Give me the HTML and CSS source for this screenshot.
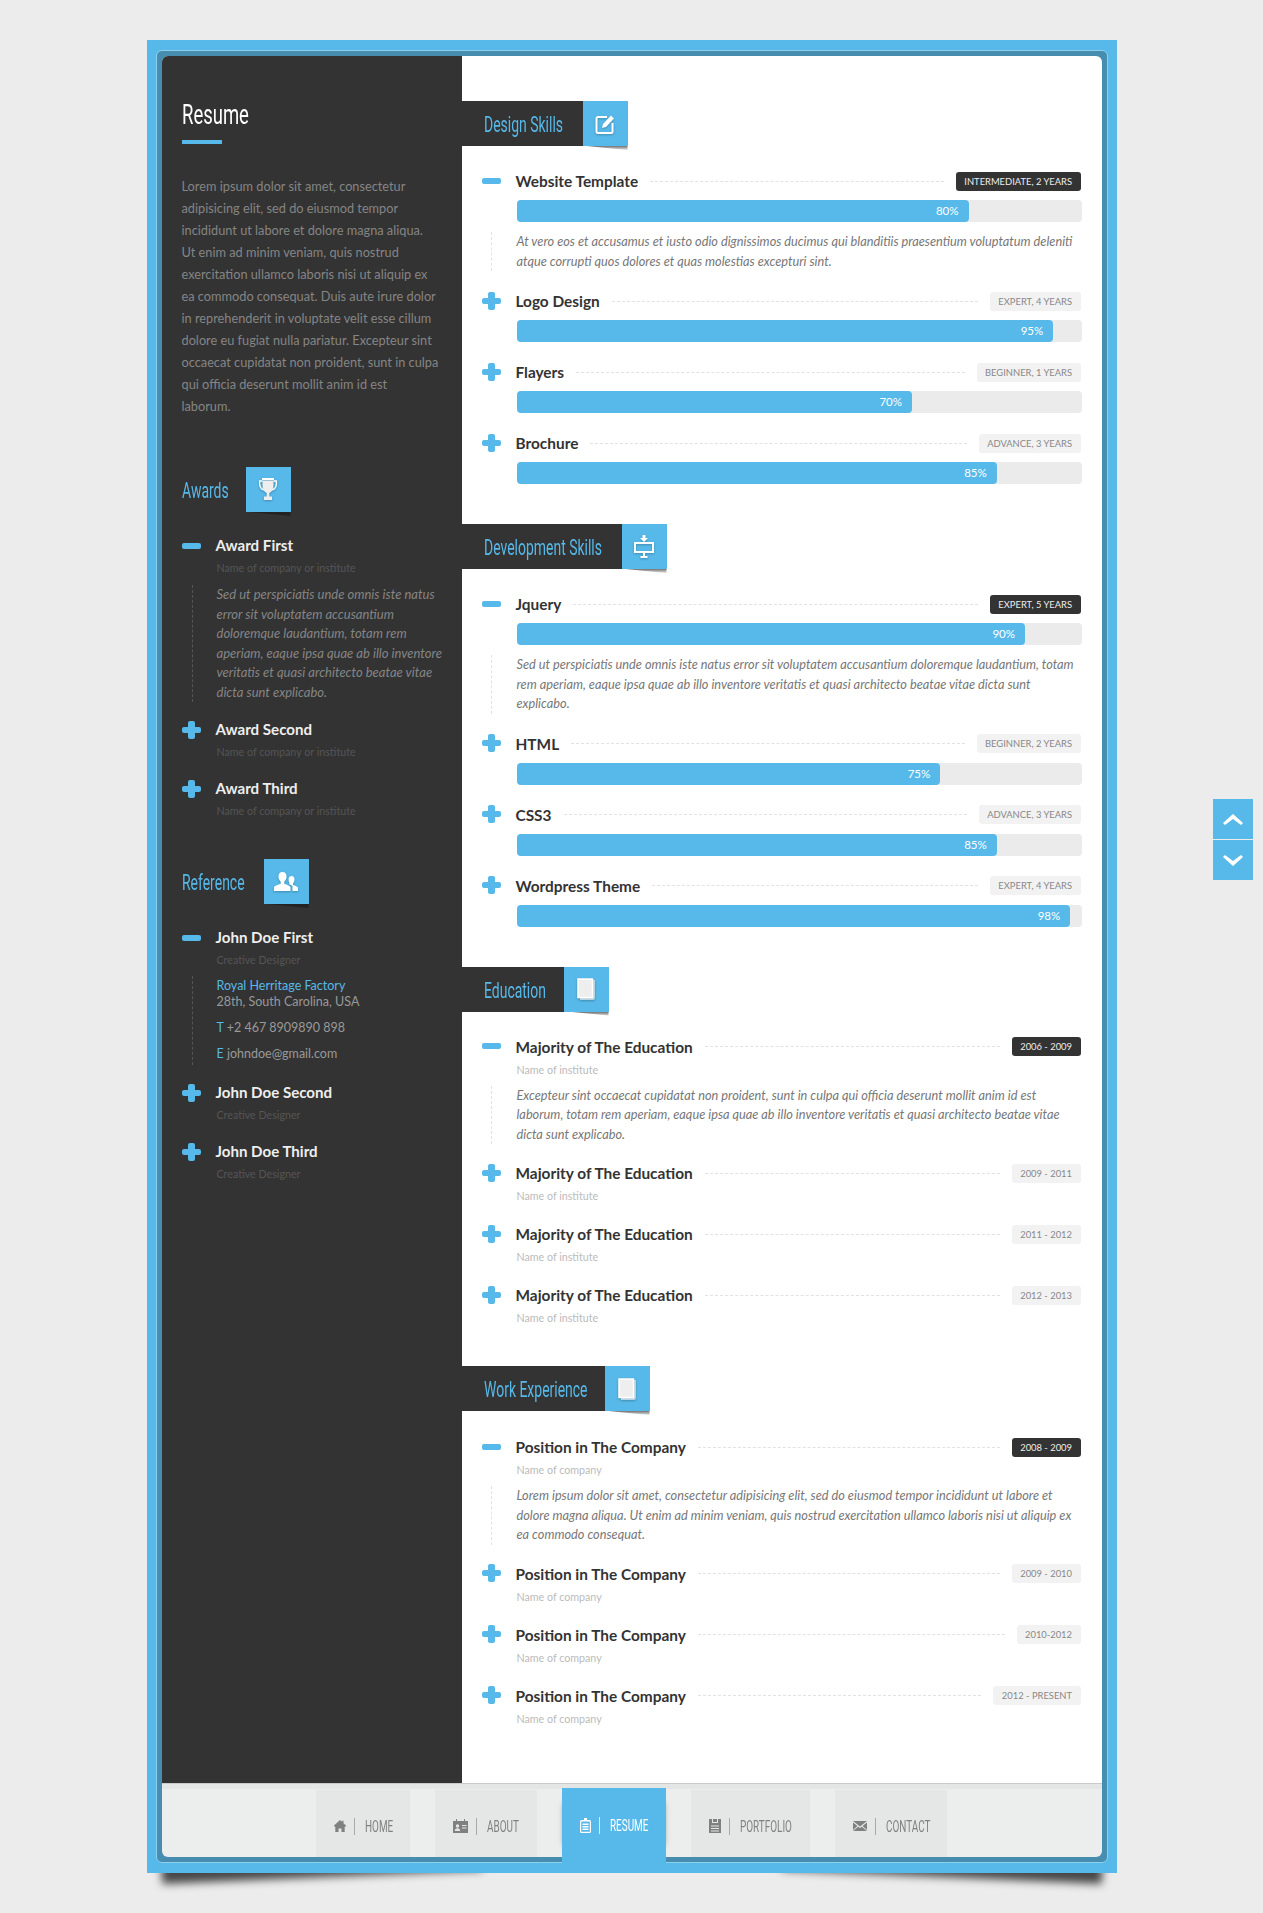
FILE: index.html
```html
<!DOCTYPE html>
<html lang="en">
  <head>
    <meta charset="UTF-8" />
    <meta name="viewport" content="width=device-width, initial-scale=1.0" />
    <title>Resume</title>
    <link rel="stylesheet" href="styles.css">
  </head>
  <body>
    <div class="page">
      <div class="frame">
        <div class="content">
          <aside class="sidebar">
            <h1 class="page-title"><span>Resume</span></h1>
            <p class="intro">Lorem ipsum dolor sit amet, consectetur<br>adipisicing elit, sed do eiusmod tempor<br>incididunt ut labore et dolore magna aliqua.<br>Ut enim ad minim veniam, quis nostrud<br>exercitation ullamco laboris nisi ut aliquip ex<br>ea commodo consequat. Duis aute irure dolor<br>in reprehenderit in voluptate velit esse cillum<br>dolore eu fugiat nulla pariatur. Excepteur sint<br>occaecat cupidatat non proident, sunt in culpa<br>qui officia deserunt mollit anim id est<br>laborum.</p>

            <div class="head">
              <h2 class="w-awards"><span>Awards</span></h2>
              <span class="head-icon">
                <svg width="18" height="23" viewBox="0 0 18 23"><path d="M3 0h12v2H3z" fill="#fff"/><path d="M3.500 2.500h11v5c0 4-2 6.500-4.200 7.500v3.500h2.700V22H5v-3.500h2.700V15C5.500 14 3.500 11.500 3.500 7.500z" fill="#eee"/><path d="M3.500 3H.7v3c0 3 1.500 5 4 6M14.500 3h2.800v3c0 3-1.500 5-4 6" fill="none" stroke="#fff" stroke-width="1.400"/></svg>
              </span>
            </div>
            <div class="item open">
              <div class="item-row"><span class="toggle"></span><h4>Award First</h4></div>
              <p class="sub">Name of company or institute</p>
              <p class="desc">Sed ut perspiciatis unde omnis iste natus<br>error sit voluptatem accusantium<br>doloremque laudantium, totam rem<br>aperiam, eaque ipsa quae ab illo inventore<br>veritatis et quasi architecto beatae vitae<br>dicta sunt explicabo.</p>
            </div>
            <div class="item">
              <div class="item-row"><span class="toggle plus"></span><h4>Award Second</h4></div>
              <p class="sub">Name of company or institute</p>
            </div>
            <div class="item">
              <div class="item-row"><span class="toggle plus"></span><h4>Award Third</h4></div>
              <p class="sub">Name of company or institute</p>
            </div>

            <div class="head head-ref">
              <h2 class="w-ref"><span>Reference</span></h2>
              <span class="head-icon">
                <svg width="24" height="20" viewBox="0 0 24 20" fill="#fff"><path d="M8.500 0c2.800 0 4 2 4 4.500 0 2.300-1 4.200-2.200 5v2.200c2.500.8 5.200 1.800 6.200 3.300V19H0v-4c1-1.500 4-2.500 6.700-3.300V9.500c-1.200-.8-2.200-2.700-2.200-5C4.500 2 5.700 0 8.500 0z"/><path d="M17.500 4c2 0 3 1.500 3 3.500 0 1.800-.8 3.200-1.600 3.900v1.500c2 .6 4 1.400 5.100 2.600V19h-5.500v-4.800c-.8-.9-2-1.500-3.400-2 .4-.5.500-.8.500-1.200-.6-.8-1-2-1-3.500 0-2 1-3.500 2.900-3.500z"/></svg>
              </span>
            </div>
            <div class="item open">
              <div class="item-row"><span class="toggle"></span><h4>John Doe First</h4></div>
              <p class="sub">Creative Designer</p>
              <div class="contact">
                <p><a href="#">Royal Herritage Factory</a><br>28th, South Carolina, USA</p>
                <p><b>T</b> +2 467 8909890 898</p>
                <p><b>E</b> johndoe@gmail.com</p>
              </div>
            </div>
            <div class="item">
              <div class="item-row"><span class="toggle plus"></span><h4>John Doe Second</h4></div>
              <p class="sub">Creative Designer</p>
            </div>
            <div class="item">
              <div class="item-row"><span class="toggle plus"></span><h4>John Doe Third</h4></div>
              <p class="sub">Creative Designer</p>
            </div>
          </aside>

          <main class="main">
            <section class="block">
              <div class="head">
                <h2 class="w-design"><span>Design Skills</span></h2>
                <span class="head-icon">
                  <svg width="21" height="20" viewBox="0 0 21 20"><path d="M12 3H3a1.500 1.500 0 0 0-1.500 1.500v13A1.500 1.500 0 0 0 3 19h13a1.500 1.500 0 0 0 1.500-1.500V9" fill="none" stroke="#fff" stroke-width="2"/><path d="M7 14l1-4 8-8.500 3 3-8 8.500z" fill="#fff"/></svg>
                </span>
              </div>
              <div class="item open">
                <div class="item-row"><span class="toggle"></span><h4>Website Template</h4><span class="rule"></span><span class="tag tag-dark">Intermediate, 2 years</span></div>
                <div class="bar"><div class="fill" style="width: 80%">80%</div></div>
                <p class="desc">At vero eos et accusamus et iusto odio dignissimos ducimus qui blanditiis praesentium voluptatum deleniti<br>atque corrupti quos dolores et quas molestias excepturi sint.</p>
              </div>
              <div class="item">
                <div class="item-row"><span class="toggle plus"></span><h4>Logo Design</h4><span class="rule"></span><span class="tag">Expert, 4 years</span></div>
                <div class="bar"><div class="fill" style="width: 95%">95%</div></div>
              </div>
              <div class="item">
                <div class="item-row"><span class="toggle plus"></span><h4>Flayers</h4><span class="rule"></span><span class="tag">Beginner, 1 years</span></div>
                <div class="bar"><div class="fill" style="width: 70%">70%</div></div>
              </div>
              <div class="item">
                <div class="item-row"><span class="toggle plus"></span><h4>Brochure</h4><span class="rule"></span><span class="tag">Advance, 3 years</span></div>
                <div class="bar"><div class="fill" style="width: 85%">85%</div></div>
              </div>
            </section>

            <section class="block">
              <div class="head">
                <h2 class="w-dev"><span>Development Skills</span></h2>
                <span class="head-icon">
                  <svg width="20" height="23" viewBox="0 0 20 23" fill="#fff"><path d="M8.500 0h3v3H14l-4 4-4-4h2.500z"/><path d="M1 8h18v9H1z" fill="none" stroke="#fff" stroke-width="2"/><path d="M9 17h2v4h2.500v2h-7v-2H9z"/></svg>
                </span>
              </div>
              <div class="item open">
                <div class="item-row"><span class="toggle"></span><h4>Jquery</h4><span class="rule"></span><span class="tag tag-dark">Expert, 5 years</span></div>
                <div class="bar"><div class="fill" style="width: 90%">90%</div></div>
                <p class="desc">Sed ut perspiciatis unde omnis iste natus error sit voluptatem accusantium doloremque laudantium, totam<br>rem aperiam, eaque ipsa quae ab illo inventore veritatis et quasi architecto beatae vitae dicta sunt<br>explicabo.</p>
              </div>
              <div class="item">
                <div class="item-row"><span class="toggle plus"></span><h4>HTML</h4><span class="rule"></span><span class="tag">Beginner, 2 years</span></div>
                <div class="bar"><div class="fill" style="width: 75%">75%</div></div>
              </div>
              <div class="item">
                <div class="item-row"><span class="toggle plus"></span><h4>CSS3</h4><span class="rule"></span><span class="tag">Advance, 3 years</span></div>
                <div class="bar"><div class="fill" style="width: 85%">85%</div></div>
              </div>
              <div class="item">
                <div class="item-row"><span class="toggle plus"></span><h4>Wordpress Theme</h4><span class="rule"></span><span class="tag">Expert, 4 years</span></div>
                <div class="bar"><div class="fill" style="width: 98%">98%</div></div>
              </div>
            </section>

            <section class="block">
              <div class="head">
                <h2 class="w-edu"><span>Education</span></h2>
                <span class="head-icon">
                  <svg width="18" height="22" viewBox="0 0 18 22"><path d="M3 2h15v18a2 2 0 0 1-2 2H3z" fill="#b9d3e0"/><path d="M1 1h14.500v18.500H1z" fill="#eee" stroke="#fff" stroke-width="1.500"/></svg>
                </span>
              </div>
              <div class="item has-sub open">
                <div class="item-row"><span class="toggle"></span><h4>Majority of The Education</h4><span class="rule"></span><span class="tag tag-dark">2006 - 2009</span></div>
                <p class="sub">Name of institute</p>
                <p class="desc">Excepteur sint occaecat cupidatat non proident, sunt in culpa qui officia deserunt mollit anim id est<br>laborum, totam rem aperiam, eaque ipsa quae ab illo inventore veritatis et quasi architecto beatae vitae<br>dicta sunt explicabo.</p>
              </div>
              <div class="item has-sub">
                <div class="item-row"><span class="toggle plus"></span><h4>Majority of The Education</h4><span class="rule"></span><span class="tag">2009 - 2011</span></div>
                <p class="sub">Name of institute</p>
              </div>
              <div class="item has-sub">
                <div class="item-row"><span class="toggle plus"></span><h4>Majority of The Education</h4><span class="rule"></span><span class="tag">2011 - 2012</span></div>
                <p class="sub">Name of institute</p>
              </div>
              <div class="item has-sub">
                <div class="item-row"><span class="toggle plus"></span><h4>Majority of The Education</h4><span class="rule"></span><span class="tag">2012 - 2013</span></div>
                <p class="sub">Name of institute</p>
              </div>
            </section>

            <section class="block">
              <div class="head">
                <h2 class="w-work"><span>Work Experience</span></h2>
                <span class="head-icon">
                  <svg width="18" height="22" viewBox="0 0 18 22"><path d="M3 2h15v18a2 2 0 0 1-2 2H3z" fill="#b9d3e0"/><path d="M1 1h14.500v18.500H1z" fill="#eee" stroke="#fff" stroke-width="1.500"/></svg>
                </span>
              </div>
              <div class="item has-sub open">
                <div class="item-row"><span class="toggle"></span><h4>Position in The Company</h4><span class="rule"></span><span class="tag tag-dark">2008 - 2009</span></div>
                <p class="sub">Name of company</p>
                <p class="desc">Lorem ipsum dolor sit amet, consectetur adipisicing elit, sed do eiusmod tempor incididunt ut labore et<br>dolore magna aliqua. Ut enim ad minim veniam, quis nostrud exercitation ullamco laboris nisi ut aliquip ex<br>ea commodo consequat.</p>
              </div>
              <div class="item has-sub">
                <div class="item-row"><span class="toggle plus"></span><h4>Position in The Company</h4><span class="rule"></span><span class="tag">2009 - 2010</span></div>
                <p class="sub">Name of company</p>
              </div>
              <div class="item has-sub">
                <div class="item-row"><span class="toggle plus"></span><h4>Position in The Company</h4><span class="rule"></span><span class="tag">2010-2012</span></div>
                <p class="sub">Name of company</p>
              </div>
              <div class="item has-sub">
                <div class="item-row"><span class="toggle plus"></span><h4>Position in The Company</h4><span class="rule"></span><span class="tag">2012 - Present</span></div>
                <p class="sub">Name of company</p>
              </div>
            </section>
          </main>
        </div>

        <nav class="nav">
          <a class="nav-item" href="#">
            <svg width="12" height="12" viewBox="0 0 12 12" fill="#808080"><path d="M6 0l2 1.800V.8h1.500v2.400L12 5.500v1h-1.300V12H7.500V8.500h-3V12H1.300V6.500H0v-1z"/></svg>
            <span class="nav-sep"></span><span class="nav-label w-home">Home</span>
          </a>
          <a class="nav-item" href="#">
            <svg width="15" height="14" viewBox="0 0 15 14"><path d="M0 2h3V0h1v2h7V0h1v2h3v12H0z" fill="#808080"/><circle cx="4.500" cy="7" r="1.700" fill="#e5e7e6"/><path d="M1.800 12c0-2 1-2.800 2.700-2.800S7.200 10 7.200 12zM9 6h4.500v1H9zM9 8.500h4.500v1H9z" fill="#e5e7e6"/></svg>
            <span class="nav-sep"></span><span class="nav-label w-about">About</span>
          </a>
          <a class="nav-item active" href="#">
            <svg width="11" height="15" viewBox="0 0 11 15" fill="#fff"><path d="M4 0h3v2h2.500A1.500 1.500 0 0 1 11 3.500v10A1.500 1.500 0 0 1 9.500 15h-8A1.500 1.500 0 0 1 0 13.500v-10A1.500 1.500 0 0 1 1.500 2H4zM1.200 3.500v10.300h8.600V3.500z"/><path d="M2.500 5.500h6v1.500h-6zM2.500 8h6v1.500h-6zM2.500 10.500h6V12h-6z"/></svg>
            <span class="nav-sep"></span><span class="nav-label w-resume">Resume</span>
          </a>
          <a class="nav-item" href="#">
            <svg width="12" height="14" viewBox="0 0 12 14" fill="#808080"><path d="M0 0h3v4h6V0h3v14H0zM2 6.500v1h8v-1zM2 9v1h8V9zM2 11.500v1h8v-1z"/><path d="M4 0h4v3H4z"/></svg>
            <span class="nav-sep"></span><span class="nav-label w-portfolio">Portfolio</span>
          </a>
          <a class="nav-item" href="#">
            <svg width="14" height="10" viewBox="0 0 14 10" fill="#808080"><path d="M0 0h14L7 5.500zM0 1.500L4.500 5 0 9zM14 1.500L9.500 5l4.500 4zM0 10l5.200-4.300L7 7l1.800-1.300L14 10z"/></svg>
            <span class="nav-sep"></span><span class="nav-label w-contact">Contact</span>
          </a>
        </nav>
      </div>
    </div>

    <div class="pager">
      <a href="#" class="pager-btn"><svg width="20" height="11" viewBox="0 0 20 11" fill="#fff"><path d="M10 0l10 9-2 2-8-6-8 6-2-2z"/></svg></a>
      <a href="#" class="pager-btn"><svg width="20" height="11" viewBox="0 0 20 11" fill="#fff"><path d="M10 11L0 2l2-2 8 6 8-6 2 2z"/></svg></a>
    </div>
  </body>
</html>
```

FILE: styles.css
```css
body {
  font-family: Lato, "Noto Sans", sans-serif;
  font-size: 13px;
  color: #333;
  background-color: #ececec;
  margin: 0;
  padding: 0;
}

h1,
h2,
h4,
p {
  margin: 0;
}

a {
  text-decoration: none;
}

/* outer blue page with the two curled shadows below it */
.page {
  position: relative;
  width: 952px;
  margin: 40px auto;
  padding: 10px 9px;
  background-color: #57b9e9;
}

.page::before,
.page::after {
  content: "";
  position: absolute;
  bottom: 11px;
  width: 320px;
  height: 20px;
  z-index: -1;
  box-shadow: 0 15px 9px rgba(0, 0, 0, 0.7);
}

.page::before {
  left: 14px;
  transform: rotate(-2.5deg);
}

.page::after {
  right: 14px;
  transform: rotate(2.5deg);
}

.frame {
  padding: 5px;
  background-color: #468db0;
  border: 1px solid #8dd0f0;
  border-radius: 6px;
}

.content {
  display: flex;
  height: 1727px;
  background-color: #fff;
  border-radius: 6px 6px 0 0;
  overflow: hidden;
}

/* sidebar */
.sidebar {
  width: 300px;
  box-sizing: border-box;
  padding: 39px 10px 0 20px;
  background-color: #333;
  color: #eee;
}

.page-title {
  font-family: Roboto, sans-serif;
  font-size: 28px;
  line-height: 40px;
  font-weight: normal;
  color: #fff;
}

.page-title span {
  display: inline-block;
  transform: scaleX(0.66);
  transform-origin: left;
}

.page-title::after {
  content: "";
  display: block;
  width: 40px;
  height: 4px;
  margin-top: 5px;
  background-color: #57b9e9;
}

.intro {
  margin-top: 31px;
  font-size: 12.75px;
  line-height: 22px;
  color: #858585;
}

/* section headings, the condensed look comes from squeezing the text */
.head {
  display: flex;
  height: 45px;
}

.head h2 {
  flex: none;
  box-sizing: border-box;
  padding-left: 22px;
  background-color: #333;
  font-family: Roboto, sans-serif;
  font-size: 22px;
  line-height: 47px;
  font-weight: normal;
  color: #57b9e9;
  white-space: nowrap;
}

.head h2 span {
  display: inline-block;
  transform: scaleX(0.635);
  transform-origin: left;
}

.w-design { width: 121px; }
.w-dev { width: 160px; }
.w-edu { width: 102px; }
.w-work { width: 143px; }
.sidebar .w-awards { width: 64px; }
.sidebar .w-ref { width: 82px; }

.head-icon {
  position: relative;
  display: flex;
  align-items: center;
  justify-content: center;
  width: 45px;
  background-color: #57b9e9;
}

.head-icon svg {
  filter: drop-shadow(0 1px 1px rgba(0, 0, 0, 0.25));
}

.head-icon::after {
  content: "";
  position: absolute;
  top: 100%;
  left: 4px;
  right: 0;
  height: 4px;
  background: linear-gradient(to bottom, rgba(0, 0, 0, 0.55), rgba(0, 0, 0, 0.1));
  clip-path: polygon(0 0, 100% 0, 100% 100%, 35% 35%);
}

.sidebar .head {
  margin-top: 50px;
  margin-bottom: 24px;
}

.sidebar .head h2 {
  padding-left: 0;
}

.sidebar .head-ref {
  margin-top: 38px;
}

.sidebar .head-icon::after {
  background: rgba(0, 0, 0, 0.3);
}

/* list items */
.item {
  margin-bottom: 20px;
}

.item-row {
  display: flex;
  align-items: center;
  height: 20px;
}

.item-row h4 {
  font-size: 15.4px;
  line-height: 20px;
  font-weight: bold;
  color: #333;
}

.sidebar .item {
  margin-bottom: 17px;
}

.sidebar .item-row h4 {
  padding-bottom: 2px;
  font-size: 15.1px;
  color: #eee;
}

.toggle {
  position: relative;
  flex: none;
  width: 19px;
  height: 19px;
  margin-right: 15px;
}

.toggle::before {
  content: "";
  position: absolute;
  left: 0;
  top: 6px;
  width: 19px;
  height: 6px;
  border-radius: 2px;
  background-color: #57b9e9;
}

.plus::after {
  content: "";
  position: absolute;
  left: 6px;
  top: 0;
  width: 7px;
  height: 18px;
  border-radius: 2px;
  background-color: #57b9e9;
}

.rule {
  flex: 1;
  margin: 0 12px;
  border-top: 1px dashed #e2e2e2;
}

.tag {
  height: 19px;
  padding: 0 8.5px;
  margin-right: 1px;
  border-radius: 3px;
  background-color: #f2f2f2;
  color: #888;
  font-size: 9.4px;
  line-height: 19px;
  text-transform: uppercase;
}

.tag-dark {
  background-color: #333;
  color: #eee;
}

.bar {
  height: 22px;
  margin: 9px 0 0 35px;
  border-radius: 4px;
  background-color: #ebebeb;
}

.fill {
  box-sizing: border-box;
  height: 22px;
  padding-right: 10px;
  border-radius: 4px;
  background-color: #57b9e9;
  color: #fff;
  font-size: 11.5px;
  line-height: 22px;
  text-align: right;
}

.sub {
  margin: 2px 0 0 35px;
  font-size: 10.7px;
  line-height: 20px;
  color: #bbb;
}

.has-sub .sub {
  margin-top: 3px;
}

.sidebar .sub {
  color: #555;
}

.desc {
  margin: 10px 0 0 9px;
  padding-left: 25px;
  border-left: 1px dashed #e2e2e2;
  font-size: 12.75px;
  font-style: italic;
  line-height: 19.5px;
  color: #777;
  white-space: nowrap;
}

.has-sub {
  margin-bottom: 18px;
}

.has-sub .desc {
  margin-top: 6px;
  margin-bottom: 19px;
}

.sidebar .desc {
  margin-top: 7px;
  margin-left: 10px;
  margin-bottom: 18px;
  padding-left: 24px;
  border-left-color: #555;
  font-size: 13px;
  color: #858585;
}

.contact {
  margin: 6px 0 18px 10px;
  padding: 2px 0 3px 24px;
  border-left: 1px dashed #555;
  font-size: 12.5px;
  line-height: 16px;
  color: #999;
}

.contact p + p {
  margin-top: 10px;
}

.contact a,
.contact b {
  font-weight: normal;
  color: #57b9e9;
}

/* main column */
.main {
  flex: 1;
  padding-top: 45px;
}

.block {
  padding: 0 20px 20px;
}

.block .head {
  margin: 0 -20px 25px;
}

.block:last-child .head {
  margin-bottom: 26px;
}

/* bottom navigation */
.nav {
  position: relative;
  z-index: 0;
  display: flex;
  justify-content: center;
  gap: 25px;
  height: 67px;
  padding-top: 6px;
  border-top: 1px solid #c9cbcb;
  border-radius: 0 0 6px 6px;
  background-color: #eceeee;
  box-shadow: inset 0 5px 0 #e4e6e6;
}

.nav-item {
  position: relative;
  display: flex;
  align-items: center;
  padding: 5px 18px 0;
  background-color: #e5e7e6;
  color: #808080;
}

.nav-sep {
  width: 1px;
  height: 17px;
  margin: 0 10px 0 8px;
  background-color: #aaa;
}

.nav-label {
  font-family: Roboto, sans-serif;
  font-size: 16px;
  text-transform: uppercase;
  white-space: nowrap;
  transform: scaleX(0.62);
  transform-origin: left;
}

.w-home { width: 27px; }
.w-about { width: 32px; }
.w-resume { width: 38px; }
.w-portfolio { width: 52px; }
.w-contact { width: 43px; }

.active {
  margin: -2px 0 -6px;
  padding-top: 0;
  background-color: #57b9e9;
  color: #fff;
}

.active .nav-sep {
  background-color: #d5eefa;
}

.active::before {
  content: "";
  position: absolute;
  top: 15px;
  bottom: 18px;
  left: 3px;
  right: 3px;
  z-index: -1;
  box-shadow: 0 0 6px rgba(0, 0, 0, 0.75);
}

/* up and down buttons on the right edge */
.pager {
  position: fixed;
  top: 799px;
  right: 10px;
  width: 40px;
}

.pager-btn {
  display: flex;
  align-items: center;
  justify-content: center;
  height: 40px;
  background-color: #57b9e9;
}

.pager-btn + .pager-btn {
  margin-top: 1px;
}
```
